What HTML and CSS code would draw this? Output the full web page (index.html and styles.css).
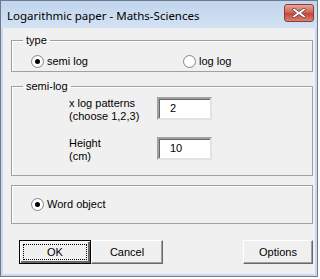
FILE: index.html
```html
<!DOCTYPE html>
<html lang="en">
<head>
    <meta charset="UTF-8">
    <title>Logarithmic paper - Maths-Sciences</title>
    <link rel="stylesheet" href="styles.css">
</head>
<body>
    <div class="window">
        <div class="titlebar">
            <span class="title">Logarithmic paper - Maths-Sciences</span>
            <span class="close">
                <svg width="16" height="12" viewBox="0 0 16 12">
                    <path d="M3 1 L8 4.5 L13 1 L15 2.5 L10.5 6 L15 9.5 L13 11 L8 7.5 L3 11 L1 9.5 L5.5 6 L1 2.5 Z" fill="#ffffff" stroke="#7a4a46" stroke-width="1"/>
                </svg>
            </span>
        </div>

        <div class="client">
            <fieldset class="frame frame-type">
                <legend>type</legend>
                <div class="radio-row">
                    <label class="radio-item item-semi"><span class="radio checked"></span>semi log</label>
                    <label class="radio-item item-loglog"><span class="radio"></span>log log</label>
                </div>
            </fieldset>

            <fieldset class="frame frame-semilog">
                <legend>semi-log</legend>
                <div class="fields">
                    <div class="field-row">
                        <div class="field-label">x log patterns<br>(choose 1,2,3)</div>
                        <div class="textbox">2</div>
                    </div>
                    <div class="field-row">
                        <div class="field-label">Height<br>(cm)</div>
                        <div class="textbox">10</div>
                    </div>
                </div>
            </fieldset>

            <div class="frame frame-word">
                <label class="radio-item"><span class="radio checked"></span>Word object</label>
            </div>

            <div class="buttons">
                <button class="btn btn-default"><span class="focus">OK</span></button>
                <button class="btn">Cancel</button>
                <button class="btn btn-options">Options</button>
            </div>
        </div>
    </div>
</body>
</html>
```

FILE: styles.css
```css
body {
    margin: 0;
    background-color: #ffffff;
    font-family: "Liberation Sans", Arial, sans-serif;
    font-size: 11px;
    color: #000;
}
.window {
    width: 316px;
    height: 275px;
    border: 1px solid #6d7b8c;
    background-color: #c9daee;
    display: flex;
    flex-direction: column;
}
.titlebar {
    height: 27px;
    display: flex;
    align-items: center;
    justify-content: space-between;
    padding-left: 6px;
    background: linear-gradient(#c2d5ec, #d3e2f4);
}
.title {
    font-family: "Noto Sans", sans-serif;
    font-size: 11.5px;
    margin-top: 2px;
}
.close {
    width: 28px;
    height: 16px;
    margin-right: 3px;
    margin-bottom: 4px;
    border: 1px solid #8e3b34;
    border-radius: 3px;
    background: linear-gradient(#e9a89f, #d06657 45%, #c04a3c 55%, #d88273);
    display: flex;
    align-items: center;
    justify-content: center;
}
.close svg {
    display: block;
}
.client {
    flex: 1;
    margin: 0 2px 2px 2px;
    background-color: #f0f0f0;
    padding: 6px 2px 0 8px;
}

/* frames */
.frame {
    margin: 0;
    padding: 0;
    border: 1px solid #a0a0a0;
    box-shadow: inset 1px 1px 0 #fff;
    min-width: 0;
}
.frame legend {
    margin-left: 11px;
    padding: 0 3px;
    line-height: 13px;
}
.frame-type {
    padding: 8px 0 3px 0;
}
.frame-semilog {
    margin-top: 8px;
    padding: 4px 0 12px 0;
}
.fields {
    padding-left: 57px;
}
.frame-word {
    margin-top: 9px;
    padding: 12px 0 12px 19px;
}

/* radios */
.radio-row {
    display: flex;
    padding-left: 19px;
}
.radio-item {
    display: flex;
    align-items: center;
    height: 13px;
    line-height: 13px;
}
.item-semi {
    width: 152px;
}
.radio {
    width: 11px;
    height: 11px;
    border: 1px solid #8a8a8a;
    border-radius: 50%;
    background: radial-gradient(#ffffff 55%, #e2e2e2);
    margin-right: 3px;
    display: flex;
    align-items: center;
    justify-content: center;
}
.radio.checked::after {
    content: "";
    width: 5px;
    height: 5px;
    border-radius: 50%;
    background-color: #000;
}

/* text fields */
.field-row {
    display: flex;
    height: 26px;
}
.field-row + .field-row {
    margin-top: 14px;
}
.field-label {
    width: 88px;
    line-height: 13px;
}
.textbox {
    width: 40px;
    height: 19px;
    background-color: #fff;
    border-top: 2px solid #a0a0a0;
    border-left: 2px solid #a0a0a0;
    border-right: 2px solid #e3e3e3;
    border-bottom: 2px solid #e3e3e3;
    box-shadow: inset 1px 1px 0 #696969;
    padding-left: 11px;
    line-height: 19px;
}

/* buttons */
.buttons {
    display: flex;
    margin-top: 16px;
    padding-left: 8px;
}
.btn {
    width: 72px;
    height: 24px;
    margin: 0;
    padding: 0;
    font-family: "Liberation Sans", Arial, sans-serif;
    font-size: 11px;
    color: #000;
    background-color: #f0f0f0;
    border: 1px solid;
    border-color: #fff #696969 #696969 #fff;
    box-shadow: inset -1px -1px 0 #a0a0a0;
}
.btn-default {
    border: 1px solid #000;
    box-shadow: inset 1px 1px 0 #fff, inset -2px -2px 0 #696969, inset -1px -1px 0 #a0a0a0;
    display: flex;
    align-items: center;
    justify-content: center;
}
.focus {
    width: 62px;
    height: 14px;
    line-height: 14px;
    border: 1px dotted #000;
}
.btn-options {
    margin-left: auto;
    width: 70px;
}
```
